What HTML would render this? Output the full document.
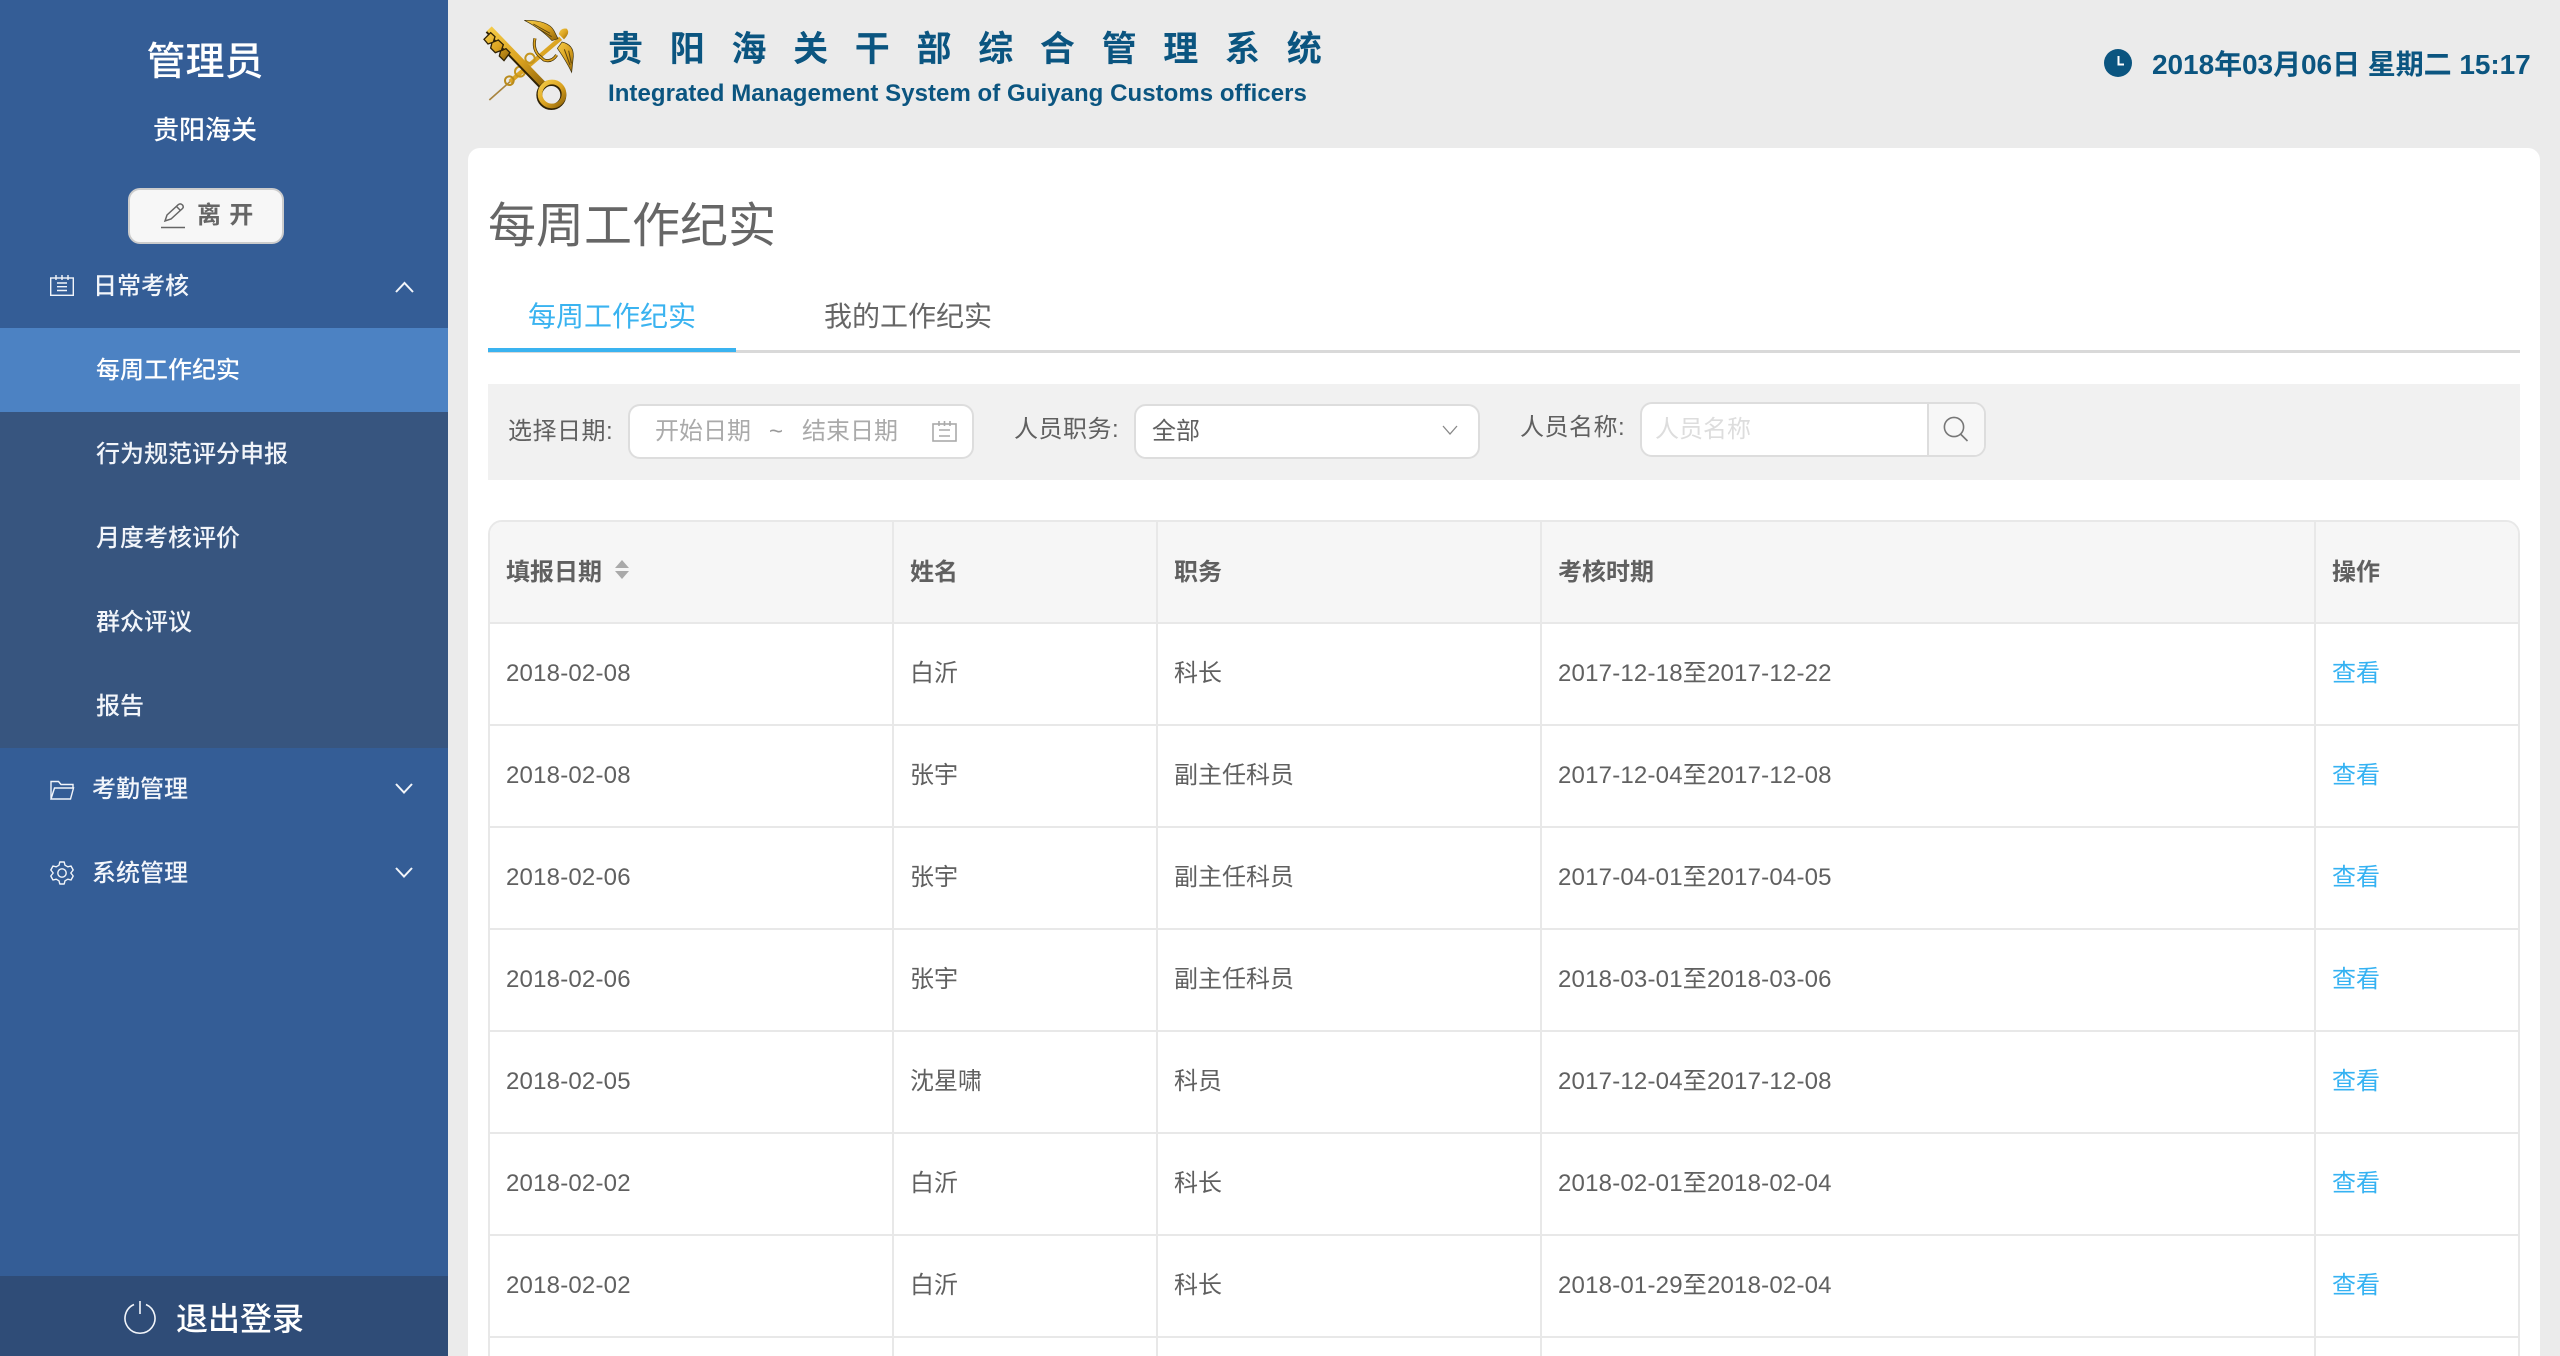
<!DOCTYPE html>
<html lang="zh-CN">
<head>
<meta charset="utf-8">
<title>贵阳海关干部综合管理系统</title>
<style>
*{box-sizing:border-box;margin:0;padding:0}
html,body{width:2560px;height:1356px;overflow:hidden;background:#ebebeb}
body{position:relative;font-family:"Liberation Sans","Noto Sans CJK SC",sans-serif;color:#606060}
.t{position:absolute;white-space:nowrap;line-height:40px;height:40px}
.box{position:absolute}
#side{position:absolute;left:0;top:0;width:448px;height:1356px;background:#345d96;color:#fff;overflow:hidden}
.m{font-size:24px;font-weight:500;color:#f2f5fa}
.sub{position:absolute;left:0;width:448px;height:84px;line-height:85px;padding-left:96px;font-size:24px;font-weight:500;color:#f2f5fa}
svg{position:absolute;overflow:visible}
.r{position:absolute;left:490px;width:2028px;height:102px;border-bottom:2px solid #e8e8e8;font-size:24px;line-height:100px}
.r span{position:absolute;top:0;white-space:nowrap}
.a{left:16px;letter-spacing:.2px}.b{left:420px}.c{left:684px}.d{left:1068px;letter-spacing:.2px}.e{left:1842px;color:#35b2f2}
.v{position:absolute;top:522px;width:2px;height:834px;background:#e8e8e8}
</style>
</head>
<body>
<div id="side">
  <div class="t" style="left:0;width:410px;text-align:center;top:40px;font-size:39px;font-weight:500;line-height:46px;height:46px">管理员</div>
  <div class="t" style="left:0;width:410px;text-align:center;top:110px;font-size:26px;font-weight:500">贵阳海关</div>
  <div class="box" style="left:128px;top:188px;width:156px;height:56px;background:#f7f7f7;border:2px solid #ccc;border-radius:12px"></div>
  <svg style="left:160px;top:202px" width="26" height="26" viewBox="0 0 26 26" fill="none" stroke="#666" stroke-width="1.5"><path d="M5 19 L7 13 L18.5 2.5 Q20.5 1 22.5 3 Q24 5 22.5 6.5 L11 17 Z"/><path d="M16.5 4.5 L20.5 8.5"/><path d="M1 25.5 H25"/></svg>
  <div class="t" style="left:197px;top:196px;font-size:24px;font-weight:700;color:#666;letter-spacing:.8px">离 开</div>

  <svg style="left:50px;top:275px" width="24" height="21" viewBox="0 0 24 21" fill="none" stroke="#f2f5fa" stroke-width="1.4"><rect x=".7" y="3" width="22.6" height="17.3"/><path d="M6 0V5M12 0V5M18 0V5M7 8H17M7 11.7H17M7 15.5H17"/></svg>
  <div class="t m" style="left:93px;top:267px">日常考核</div>
  <svg style="left:395px;top:281px" width="19" height="12" viewBox="0 0 19 12" fill="none" stroke="#f2f5fa" stroke-width="2"><path d="M1 11 L9.5 2 L18 11"/></svg>

  <div class="box" style="left:0;top:328px;width:448px;height:420px;background:#37557f"></div>
  <div class="sub" style="top:328px;background:#4c82c3;color:#fff">每周工作纪实</div>
  <div class="sub" style="top:412px">行为规范评分申报</div>
  <div class="sub" style="top:496px">月度考核评价</div>
  <div class="sub" style="top:580px">群众评议</div>
  <div class="sub" style="top:664px">报告</div>

  <svg style="left:50px;top:780px" width="24" height="20" viewBox="0 0 24 20" fill="none" stroke="#f2f5fa" stroke-width="1.4"><path d="M1 18.5 V1.5 H8.5 L11 4.5 H23 V8"/><path d="M1 19 L4.5 8 H23.5 L20.5 19 Z"/></svg>
  <div class="t m" style="left:92px;top:770px">考勤管理</div>
  <svg style="left:395px;top:783px" width="18" height="11" viewBox="0 0 18 11" fill="none" stroke="#f2f5fa" stroke-width="2"><path d="M1 1 L9 9.5 L17 1"/></svg>

  <svg style="left:50px;top:861px" width="24" height="24" viewBox="0 0 24 24" fill="none" stroke="#f2f5fa" stroke-width="1.4"><path d="M9.8 1 H14.2 L15 4.2 L17.8 5.8 L21 5 L23.2 9 L20.8 12 L23.2 15 L21 19 L17.8 18.2 L15 19.8 L14.2 23 H9.8 L9 19.8 L6.2 18.2 L3 19 L.8 15 L3.2 12 L.8 9 L3 5 L6.2 5.8 L9 4.2 Z" stroke-linejoin="round"/><circle cx="12" cy="12" r="4.2"/></svg>
  <div class="t m" style="left:92px;top:854px">系统管理</div>
  <svg style="left:395px;top:867px" width="18" height="11" viewBox="0 0 18 11" fill="none" stroke="#f2f5fa" stroke-width="2"><path d="M1 1 L9 9.5 L17 1"/></svg>

  <div class="box" style="left:0;top:1276px;width:448px;height:80px;background:#2f4c77"></div>
  <svg style="left:124px;top:1301px" width="32" height="32" viewBox="0 0 32 32" fill="none" stroke="#f2f5fa" stroke-width="1.6"><path d="M10 3.5 A15 15 0 1 0 22 3.5"/><path d="M16 0 V13"/></svg>
  <div class="t" style="left:176px;top:1299px;font-size:32px;font-weight:500;color:#fff">退出登录</div>
</div>

<!-- logo -->
<svg style="left:470px;top:10px" width="130" height="110" viewBox="0 0 390 330">
  <defs><linearGradient id="g" x1="0" y1="0" x2="1" y2="1"><stop offset="0" stop-color="#f4cb48"/><stop offset=".55" stop-color="#d9a11f"/><stop offset="1" stop-color="#8f6409"/></linearGradient></defs>
  <path d="M58 270 L120 215" stroke="#a8843f" stroke-width="5" fill="none"/>
  <path d="M120 215 L272 85" stroke="url(#g)" stroke-width="13" fill="none"/>
  <path d="M163 31 Q235 30 252 62 L264 86 L246 92 Q215 58 163 31Z" fill="url(#g)" stroke="#3f3210" stroke-width="2"/>
  <path d="M190 42 L240 70 M205 56 L245 80" stroke="#5a4410" stroke-width="3" fill="none"/>
  <path d="M276 96 Q312 104 310 140 L305 187 Q288 152 262 115Z" fill="url(#g)" stroke="#3f3210" stroke-width="2"/>
  <path d="M283 118 L300 165 M296 122 L304 160" stroke="#5a4410" stroke-width="3" fill="none"/>
  <path d="M266 72 Q272 52 290 56 Q302 68 282 88Z" fill="url(#g)"/>
  <path d="M195 85 Q188 115 205 135 L222 150 Q245 158 260 135" stroke="#3c2c08" stroke-width="9" fill="none"/>
  <path d="M195 85 Q188 115 205 135 L222 150 Q245 158 260 135" stroke="#d9a11f" stroke-width="5" fill="none"/>
  <circle cx="118" cy="212" r="13" fill="none" stroke="#b98b1c" stroke-width="6"/>
  <circle cx="150" cy="185" r="15" fill="none" stroke="#c4951e" stroke-width="6"/>
  <circle cx="180" cy="145" r="14" fill="none" stroke="#c4951e" stroke-width="6"/>
  <path d="M58 56 L228 232" stroke="#2f2205" stroke-width="22" fill="none" transform="translate(-3 4)"/>
  <path d="M58 56 L228 232" stroke="url(#g)" stroke-width="20" fill="none"/>
  <path d="M42 88 L62 68 L75 80 L70 96 L85 90 L100 104 L94 122 L108 116 L120 128 L102 152 L88 138 L92 122 L76 128 L62 114 L66 98 L54 102Z" fill="url(#g)" stroke="#2f2205" stroke-width="4"/>
  <ellipse cx="246" cy="252" rx="36" ry="36" fill="none" stroke="#2f2205" stroke-width="18" transform="translate(-2 3)"/>
  <ellipse cx="246" cy="252" rx="36" ry="36" fill="none" stroke="url(#g)" stroke-width="14"/>
</svg>

<div class="t" style="left:608px;top:28px;font-size:35px;line-height:44px;height:44px;font-weight:700;color:#0b5580;letter-spacing:26.7px">贵阳海关干部综合管理系统</div>
<div class="t" style="left:608px;top:74px;font-size:24px;font-weight:700;color:#0b5580;letter-spacing:.05px">Integrated Management System of Guiyang Customs officers</div>
<svg style="left:2104px;top:49px" width="28" height="28" viewBox="0 0 28 28"><circle cx="14" cy="14" r="14" fill="#0b5580"/><path d="M14.5 7 V15.5 H20" stroke="#fff" stroke-width="2" fill="none"/></svg>
<div class="t" style="left:2152px;top:45px;font-size:28px;font-weight:700;color:#0b5580;letter-spacing:-.05px">2018年03月06日 星期二 15:17</div>

<div class="box" style="left:468px;top:148px;width:2072px;height:1208px;background:#fff;border-radius:12px 12px 0 0"></div>
<div class="t" style="left:488px;top:197px;font-size:48px;line-height:60px;height:60px;color:#666">每周工作纪实</div>
<div class="t" style="left:528px;top:297px;font-size:28px;color:#3ab3f0">每周工作纪实</div>
<div class="t" style="left:824px;top:297px;font-size:28px;color:#666">我的工作纪实</div>
<div class="box" style="left:488px;top:350px;width:2032px;height:3px;background:#d9d9d9"></div>
<div class="box" style="left:488px;top:348px;width:248px;height:4px;background:#3ab3f0"></div>

<div class="box" style="left:488px;top:384px;width:2032px;height:96px;background:#f1f1f1"></div>
<div class="t" style="left:508px;top:412px;font-size:24px;letter-spacing:.5px">选择日期:</div>
<div class="box" style="left:628px;top:404px;width:346px;height:55px;background:#fff;border:2px solid #ddd;border-radius:12px"></div>
<div class="t" style="left:655px;top:412px;font-size:24px;color:#aaa">开始日期</div>
<div class="t" style="left:769px;top:412px;font-size:24px;color:#999">~</div>
<div class="t" style="left:802px;top:412px;font-size:24px;color:#aaa">结束日期</div>
<svg style="left:932px;top:421px" width="25" height="21" viewBox="0 0 25 21" fill="none" stroke="#aaa" stroke-width="1.6"><rect x="1" y="3" width="23" height="17"/><path d="M7 0V5M12.5 0V5M18 0V5M7 9H18M7 15H18"/></svg>
<div class="t" style="left:1014px;top:410px;font-size:24px;letter-spacing:.5px">人员职务:</div>
<div class="box" style="left:1134px;top:404px;width:346px;height:55px;background:#fff;border:2px solid #ddd;border-radius:12px"></div>
<div class="t" style="left:1152px;top:412px;font-size:24px">全部</div>
<svg style="left:1442px;top:425px" width="16" height="10" viewBox="0 0 16 10" fill="none" stroke="#888" stroke-width="1.3"><path d="M1 1 L8 9 L15 1"/></svg>
<div class="t" style="left:1520px;top:408px;font-size:24px;letter-spacing:.5px">人员名称:</div>
<div class="box" style="left:1640px;top:402px;width:346px;height:55px;background:#fff;border:2px solid #ddd;border-radius:12px"></div>
<div class="box" style="left:1927px;top:404px;width:57px;height:51px;background:#f7f7f7;border-left:2px solid #ddd;border-radius:0 10px 10px 0"></div>
<div class="t" style="left:1655px;top:410px;font-size:24px;color:#ddd">人员名称</div>
<svg style="left:1943px;top:416px" width="26" height="26" viewBox="0 0 26 26" fill="none" stroke="#777" stroke-width="1.6"><circle cx="11" cy="11" r="9.6"/><path d="M17.5 18 L24.5 25"/></svg>

<!-- table -->
<div class="box" style="left:488px;top:520px;width:2032px;height:900px;border:2px solid #e8e8e8;border-radius:14px;background:#fff"></div>
<div class="box" style="left:490px;top:522px;width:2028px;height:102px;background:#f6f6f6;border-bottom:2px solid #e8e8e8;border-radius:12px 12px 0 0"></div>
<div class="t" style="left:506px;top:553px;font-size:24px;font-weight:700">填报日期</div>
<svg style="left:615px;top:560px" width="14" height="19" viewBox="0 0 14 19" fill="#aaa"><path d="M7 0 L14 8 H0Z M0 11 H14 L7 19Z"/></svg>
<div class="t" style="left:910px;top:553px;font-size:24px;font-weight:700">姓名</div>
<div class="t" style="left:1174px;top:553px;font-size:24px;font-weight:700">职务</div>
<div class="t" style="left:1558px;top:553px;font-size:24px;font-weight:700">考核时期</div>
<div class="t" style="left:2332px;top:553px;font-size:24px;font-weight:700">操作</div>

<div class="r" style="top:624px"><span class="a">2018-02-08</span><span class="b">白沂</span><span class="c">科长</span><span class="d">2017-12-18至2017-12-22</span><span class="e">查看</span></div>
<div class="r" style="top:726px"><span class="a">2018-02-08</span><span class="b">张宇</span><span class="c">副主任科员</span><span class="d">2017-12-04至2017-12-08</span><span class="e">查看</span></div>
<div class="r" style="top:828px"><span class="a">2018-02-06</span><span class="b">张宇</span><span class="c">副主任科员</span><span class="d">2017-04-01至2017-04-05</span><span class="e">查看</span></div>
<div class="r" style="top:930px"><span class="a">2018-02-06</span><span class="b">张宇</span><span class="c">副主任科员</span><span class="d">2018-03-01至2018-03-06</span><span class="e">查看</span></div>
<div class="r" style="top:1032px"><span class="a">2018-02-05</span><span class="b">沈星啸</span><span class="c">科员</span><span class="d">2017-12-04至2017-12-08</span><span class="e">查看</span></div>
<div class="r" style="top:1134px"><span class="a">2018-02-02</span><span class="b">白沂</span><span class="c">科长</span><span class="d">2018-02-01至2018-02-04</span><span class="e">查看</span></div>
<div class="r" style="top:1236px"><span class="a">2018-02-02</span><span class="b">白沂</span><span class="c">科长</span><span class="d">2018-01-29至2018-02-04</span><span class="e">查看</span></div>

<div class="v" style="left:892px"></div>
<div class="v" style="left:1156px"></div>
<div class="v" style="left:1540px"></div>
<div class="v" style="left:2314px"></div>
</body>
</html>
